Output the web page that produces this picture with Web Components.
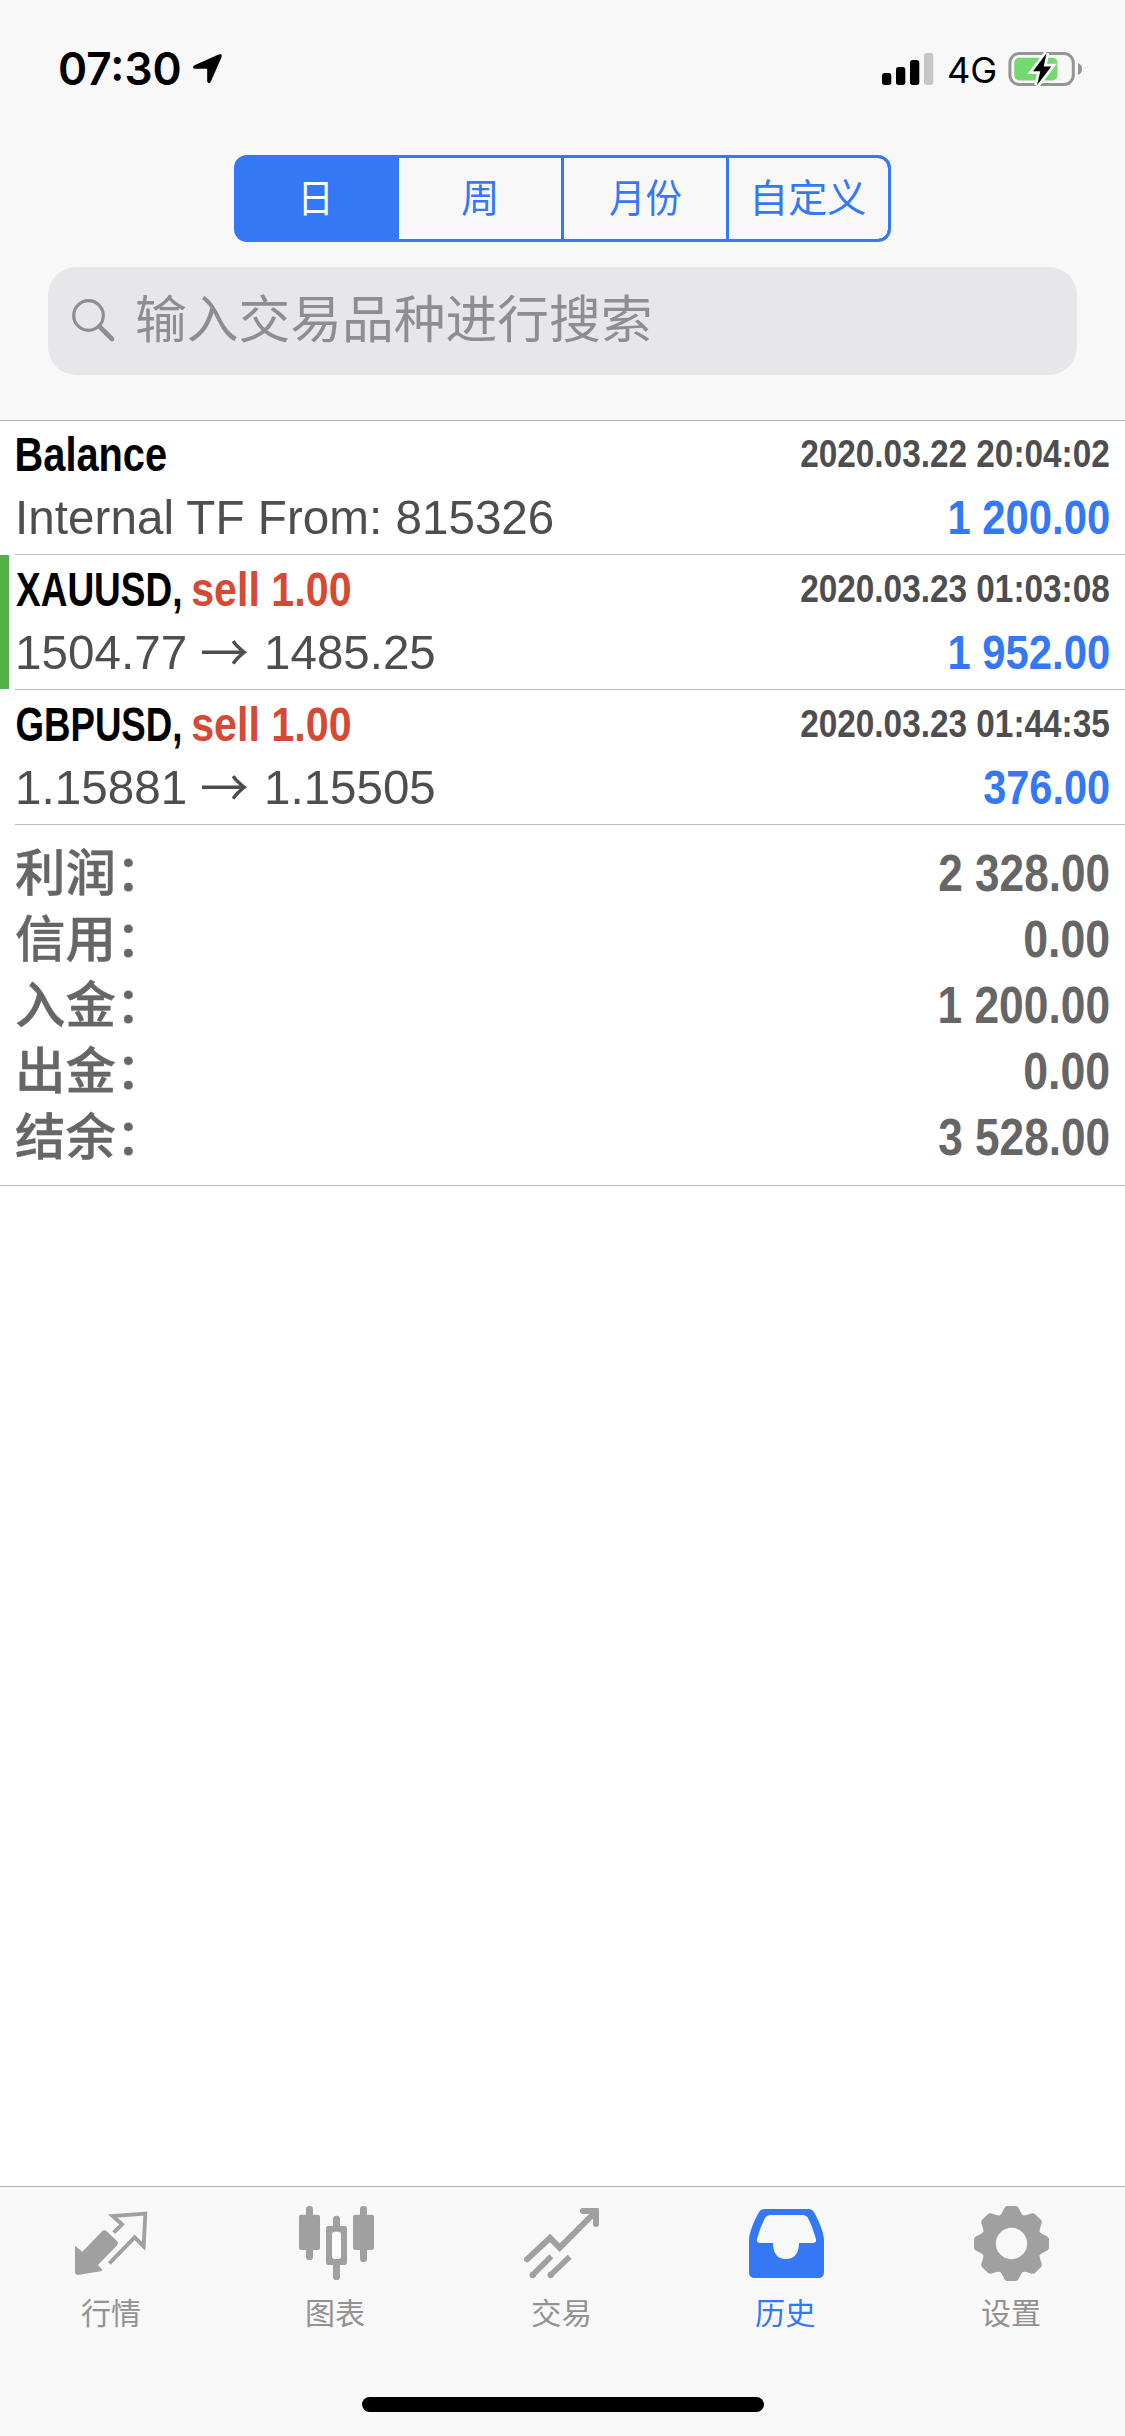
<!DOCTYPE html>
<html lang="zh-CN">
<head>
<meta charset="utf-8">
<title>历史</title>
<style>
html,body{margin:0;padding:0;background:#fff}
body{width:1125px;height:2436px;overflow:hidden;font-family:"Liberation Sans","Noto Sans CJK SC",sans-serif}
</style>
</head>
<body>
<history-app></history-app>
<script>
const CJK='"Noto Sans CJK SC",sans-serif', SANS='"Liberation Sans",Arial,sans-serif', UI='Inter,"Liberation Sans",sans-serif';
const ctx=document.createElement('canvas').getContext('2d');
function define(name,html,setup){
  const t=document.createElement('template');t.innerHTML=html;
  customElements.define(name,class extends HTMLElement{
    connectedCallback(){
      if(this.shadowRoot)return;
      this.attachShadow({mode:'open'}).append(t.content.cloneNode(true));
      if(setup)setup(this,this.shadowRoot);
    }
  });
}
// One line of text whose visible glyphs span exactly w pixels; its baseline is the box's bottom edge.
define('fit-text','<style>:host{display:block;flex:none}span{display:block;width:max-content;white-space:pre;transform-origin:0 0}</style><span></span>',(h,r)=>{
  const s=r.querySelector('span'),text=h.getAttribute('text'),size=+h.getAttribute('size'),weight=h.getAttribute('weight')||400;
  const fam={cjk:CJK,ui:UI}[h.getAttribute('face')]||SANS,w=+h.getAttribute('w'),H=+h.getAttribute('h');
  ctx.font=`${weight} ${size}px ${fam}`;
  const m=ctx.measureText(text),ink=m.actualBoundingBoxLeft+m.actualBoundingBoxRight,k=w/ink;
  s.textContent=text;
  s.style.font=`${weight} ${size}px/${H}px ${fam}`;
  s.style.transform=`translate(${m.actualBoundingBoxLeft*k}px,${H/2-(m.fontBoundingBoxAscent-m.fontBoundingBoxDescent)/2}px) scaleX(${k})`;
  h.style.width=w+'px';h.style.height=H+'px';
});
define('status-bar',`<style>:host{display:flex;justify-content:space-between;box-sizing:border-box;height:155px;padding:52px 42px 0 60px;color:#000}
.l,.r{display:flex;align-items:flex-start}.l svg{margin:1px 0 0 12px}.r fit-text{margin:5px 13px 0 15px}</style>
<div class="l"><fit-text face="ui" weight="600" size="45" w="120" h="33" text="07:30"></fit-text>
<svg width="31" height="31" viewBox="0 0 31 31"><path d="M2.5 12.2 26.6 1.6Q30.8 .2 29.4 4.6L18.9 28.6Q17.9 30.6 16.4 30 15.2 29.6 15.2 28V16.6Q15.2 15.8 14.4 15.8H3Q1.2 15.7 1 14.4 .9 12.9 2.5 12.2Z"/></svg></div>
<div class="r"><svg width="52" height="34" viewBox="0 0 52 34"><rect x="0" y="21" width="9.3" height="12" rx="2.7"/><rect x="14" y="15" width="9.3" height="18" rx="2.7"/><rect x="28" y="8" width="9.3" height="25" rx="2.7"/><rect x="42" y="1" width="9.3" height="32" rx="2.7" fill="#c6c6c6"/></svg>
<fit-text face="ui" weight="400" size="36" w="46.5" h="26.5" text="4G"></fit-text>
<svg width="75" height="35" viewBox="0 0 75 35"><rect x="1.9" y="1.5" width="63.4" height="31" rx="9.5" fill="none" stroke="#959595" stroke-width="3"/><path d="M70 11Q74 12.5 74 17T70 23Z" fill="#959595"/><rect x="6.3" y="5.7" width="43.2" height="22.7" rx="5" fill="#74da70"/><path d="M38.5 1.3 25 19.3H32.3L29 33.3 43.3 14.5H35.7Z" fill="#000" stroke="#f8f8f8" stroke-width="5.5" paint-order="stroke" stroke-linejoin="miter"/></svg></div>`);
define('segment-control',`<style>:host{display:flex;box-sizing:border-box;width:657px;height:87px;margin:0 0 0 234px;border:3px solid #3478f6;border-radius:13px;overflow:hidden;background:#3478f6}
div{box-sizing:border-box;width:165px;display:flex;justify-content:center;padding-top:26px;border-right:3px solid #3478f6;background:#f8f8f8;color:#3478f6}
.on{width:162px;background:#3478f6;color:#fff;padding-right:3px}.week{padding-right:2px}.last{border:0;flex:1;padding-left:4px;border-radius:0 10px 10px 0}</style>
<div class="on"><fit-text face="cjk" size="39" w="25" h="28" text="日"></fit-text></div><div class="week"><fit-text face="cjk" size="39" w="33.5" h="28" text="周"></fit-text></div><div><fit-text face="cjk" size="39" w="71" h="28" text="月份"></fit-text></div><div class="last"><fit-text face="cjk" size="39" w="110.5" h="28" text="自定义"></fit-text></div>`);
define('search-field',`<style>:host{display:flex;box-sizing:border-box;width:1029px;height:108px;margin:25px 0 0 48px;padding:32px 0 0 24px;border-radius:28px;background:#e7e7e9;color:#8e8e91}svg{flex:none;margin-right:21px}fit-text{margin-top:1px}</style>
<svg width="44" height="44" viewBox="0 0 44 44" fill="none" stroke="currentColor"><circle cx="16.5" cy="16.5" r="14.8" stroke-width="3.2"/><path d="M27.5 27.5 40 40" stroke-width="4.6" stroke-linecap="round"/></svg>
<fit-text face="cjk" size="51" w="512.5" h="38.5" text="输入交易品种进行搜索"></fit-text>`);
define('page-header',`<style>:host{display:block;box-sizing:border-box;height:421px;background:#f8f8f8;border-bottom:1px solid #b2b2b2}</style><status-bar></status-bar><segment-control></segment-control><search-field></search-field>`);
define('deal-row',`<style>:host{display:flex;box-sizing:border-box;height:135px}
:host([first]){height:134px}:host([first]) .in{padding-top:16px}
.mark{width:9px;margin-right:6px;margin-bottom:1px}:host([tp]) .mark{background:#52b148}
.in{flex:1;box-sizing:border-box;padding:17px 16px 0 0;border-bottom:1px solid #bcbcbe}
.line{display:flex;justify-content:space-between;align-items:flex-end}.line+.line{margin-top:29px}.g{display:flex;align-items:flex-end}</style>
<div class="mark"></div><div class="in"><div class="line"><div class="g"><slot name="title"></slot></div><slot name="date"></slot></div><div class="line"><div class="g"><slot name="detail"></slot></div><slot name="amount"></slot></div></div>`);
define('summary-row',`<style>:host{display:flex;justify-content:space-between;align-items:flex-end;box-sizing:border-box;height:66px;padding:0 16px 0 16px;color:#666}</style><slot></slot>`);
define('deal-list',`<style>:host{display:block}
[slot=title]{color:#000}[slot=title].s{color:#d54a35;margin-left:11.5px}[slot=date]{color:#4e4e50;margin-bottom:4px}[slot=detail]{color:#4e4e50}[slot=amount]{color:#3478f6;margin-right:1px}
[slot=detail].to{margin-bottom:-3px;margin-left:17px}
summary-row fit-text[face=cjk]{-webkit-text-stroke:.4px #666}
.sum{height:360px;border-bottom:1px solid #bcbcbe}</style>
<deal-row first>
<fit-text slot="title" style="margin-left:2px" weight="700" size="49" w="149" h="34" text="Balance"></fit-text>
<fit-text slot="date" weight="700" size="39.5" w="308" h="28" text="2020.03.22 20:04:02"></fit-text>
<fit-text slot="detail" style="margin-left:4px" size="49" w="535" h="34" text="Internal TF From: 815326"></fit-text>
<fit-text slot="amount" weight="700" size="48.5" w="158.5" h="34" text="1 200.00"></fit-text></deal-row>
<deal-row tp>
<fit-text slot="title" style="margin-left:.5px" weight="700" size="49" w="164.5" h="34" text="XAUUSD,"></fit-text><fit-text slot="title" class="s" weight="700" size="49" w="158.5" h="34" text="sell 1.00"></fit-text>
<fit-text slot="date" weight="700" size="39.5" w="308" h="28" text="2020.03.23 01:03:08"></fit-text>
<fit-text slot="detail" style="margin-left:3px" size="49" w="167" h="34" text="1504.77"></fit-text><fit-text slot="detail" class="to" face="cjk" size="51" w="46" h="34" text="→"></fit-text><fit-text slot="detail" style="margin-left:18.5px" size="49" w="167.5" h="34" text="1485.25"></fit-text>
<fit-text slot="amount" weight="700" size="48.5" w="158.5" h="34" text="1 952.00"></fit-text></deal-row>
<deal-row>
<fit-text slot="title" style="margin-left:1.5px" weight="700" size="49" w="163.5" h="34" text="GBPUSD,"></fit-text><fit-text slot="title" class="s" weight="700" size="49" w="158.5" h="34" text="sell 1.00"></fit-text>
<fit-text slot="date" weight="700" size="39.5" w="308" h="28" text="2020.03.23 01:44:35"></fit-text>
<fit-text slot="detail" style="margin-left:3px" size="49" w="167" h="34" text="1.15881"></fit-text><fit-text slot="detail" class="to" face="cjk" size="51" w="46" h="34" text="→"></fit-text><fit-text slot="detail" style="margin-left:18.5px" size="49" w="167.5" h="34" text="1.15505"></fit-text>
<fit-text slot="amount" weight="700" size="48.5" w="124.5" h="34" text="376.00"></fit-text></deal-row>
<div class="sum">
<summary-row><fit-text face="cjk" weight="500" size="50" w="117" h="35" text="利润："></fit-text><fit-text weight="700" size="51" w="170" h="35" text="2 328.00"></fit-text></summary-row>
<summary-row><fit-text face="cjk" weight="500" size="50" w="117" h="35" text="信用："></fit-text><fit-text weight="700" size="51" w="84" h="35" text="0.00"></fit-text></summary-row>
<summary-row><fit-text face="cjk" weight="500" size="50" w="117" h="35" text="入金："></fit-text><fit-text weight="700" size="51" w="169" h="35" text="1 200.00"></fit-text></summary-row>
<summary-row><fit-text face="cjk" weight="500" size="50" w="114" h="35" style="margin-left:3px" text="出金："></fit-text><fit-text weight="700" size="51" w="84" h="35" text="0.00"></fit-text></summary-row>
<summary-row><fit-text face="cjk" weight="500" size="50" w="117" h="35" text="结余："></fit-text><fit-text weight="700" size="51" w="170" h="35" text="3 528.00"></fit-text></summary-row>
</div>`);
define('tab-item',`<style>:host{display:flex;flex-direction:column;align-items:center;width:225px;padding-top:19px;color:#a0a0a0}:host([active]){color:#3478f6}
::slotted(svg){display:block;width:75px;height:75px;fill:currentColor}fit-text{color:#929292;margin-top:20px;margin-right:2px}:host([active]) fit-text{color:#3478f6}</style><slot></slot>`,(h,r)=>{
  const f=document.createElement('fit-text');
  for(const [k,v] of Object.entries({face:'cjk',size:30,h:23.5,w:h.getAttribute('w'),text:h.getAttribute('label')}))f.setAttribute(k,v);
  r.append(f);
});
define('tab-bar',`<style>:host{display:flex;flex-direction:column;align-items:center;box-sizing:border-box;height:250px;border-top:1px solid #b2b2b2;background:#f8f8f8}
nav{display:flex;height:210px;width:1125px;margin-right:2px}.home{width:402px;height:15px;border-radius:8px;background:#000;margin-left:1px}</style>
<nav>
<tab-item label="行情" w="59"><svg viewBox="222 108 225 225"><path d="M225 231Q225 226 229 230L247 245 305 185Q312 177 320 184L351 213Q357 220 350 227L294 285 304 296Q309 302 302 304L238 314Q225 316 225 305Z"/><path d="M341 188 366 163 338 138 436 131 431 229 404 202 328 280" fill="none" stroke="currentColor" stroke-width="11.5"/></svg></tab-item>
<tab-item label="图表" w="57"><svg viewBox="897 108 225 225"><rect x="918" y="108" width="21" height="162" rx="10"/><rect x="897" y="134" width="63" height="106" rx="7"/><rect x="1080" y="108" width="21" height="168" rx="10"/><rect x="1059" y="134" width="63" height="106" rx="7"/><rect x="999" y="137" width="21" height="193" rx="10"/><rect x="978" y="168" width="63" height="117" rx="7"/><rect x="996" y="185" width="27" height="82" rx="8" fill="#fcfcfc"/></svg></tab-item>
<tab-item label="交易" w="57"><svg viewBox="372 108 225 225"><g fill="none" stroke="currentColor" stroke-width="18" stroke-linecap="round"><path d="M381 268 450 204 479 233 583 129"/><path d="M549 123H588V162" stroke-linejoin="round"/></g><path d="M576 114H592Q597 114 597 119V135L576 130Z"/><g fill="none" stroke="currentColor" stroke-width="17"><path d="M398 315 454 259M452 315 509 260"/><path d="M398 315h.1M452 315h.1" stroke-linecap="round" stroke-width="19"/></g></svg></tab-item>
<tab-item label="历史" w="58.5" active><svg viewBox="72 108 225 225"><path fill-rule="evenodd" d="M120 117H250Q262 117 268 128C281 151 297 187 297 211V306Q297 324 280 324H89Q72 324 72 306V211C72 187 88 151 101 128Q107 117 120 117ZM137 135Q124 135 119 146C109 166 102 186 96 207Q94 219 106 219H144C144 250 157 267 183 267S222 250 222 219H263Q275 219 273 207C267 186 260 166 250 146Q245 135 232 135Z"/></svg></tab-item>
<tab-item label="设置" w="58"><svg viewBox="747 108 225 225"><path id="gear"/></svg></tab-item>
</nav><div class="home"></div>`,(h,r)=>{
  // Eight rounded teeth around a ring.
  const P=[[-38,-82],[-35,-84],[-30,-90],[-24,-101],[-20,-112.5],[-12,-112.5],[12,-112.5],[20,-112.5],[24,-101],[30,-90],[35,-84],[38,-82]];
  let d='';
  for(let i=0;i<8;i++){const a=i*Math.PI/4,c=Math.cos(a),s=Math.sin(a);
    const q=P.map(([x,y])=>(859.5+x*c-y*s).toFixed(1)+' '+(220.5+x*s+y*c).toFixed(1));
    d+=(i?'L':'M')+q[1]+'L'+q[2]+'L'+q[3]+'Q'+q[4]+' '+q[5]+'L'+q[6]+'Q'+q[7]+' '+q[8]+'L'+q[9]+'L'+q[10];}
  const g=r.querySelector('#gear');g.setAttribute('d',d+'ZM906.5 220.5a47 47 0 1 0 -94 0a47 47 0 1 0 94 0Z');g.setAttribute('fill-rule','evenodd');
});
define('history-app',`<style>:host{display:flex;flex-direction:column;width:1125px;height:2436px;background:#fff}page-header,tab-bar{flex:none}deal-list{flex:1}</style><page-header></page-header><deal-list></deal-list><tab-bar></tab-bar>`);
</script>
</body>
</html>
